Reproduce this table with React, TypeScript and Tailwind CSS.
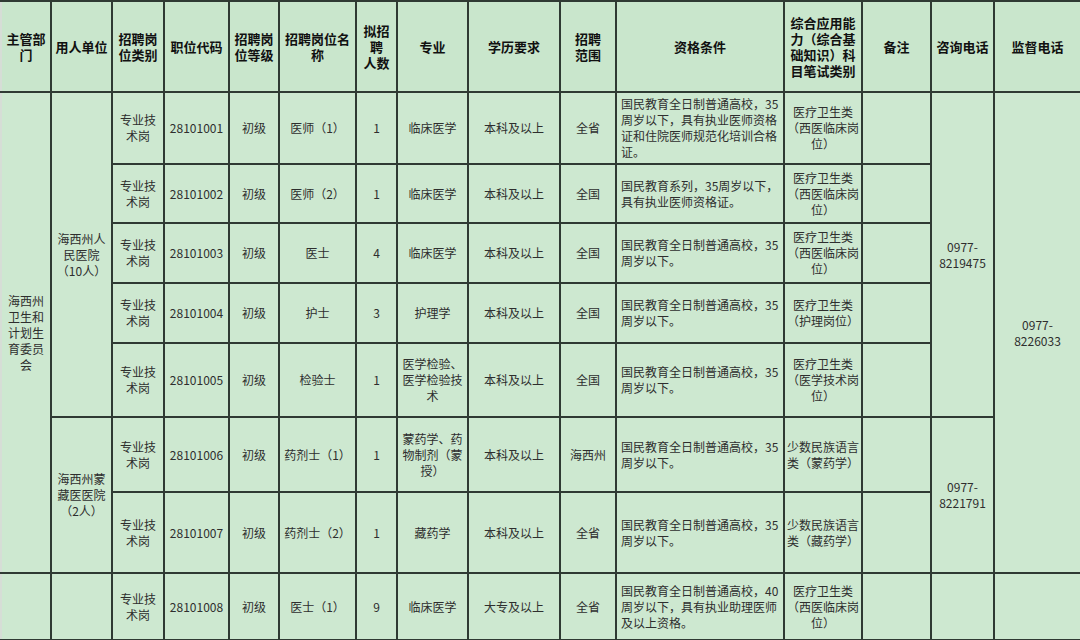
type Job = {
  cat: string[]
  code: string
  level: string
  name: string
  num: string
  major: string[]
  edu: string
  scope: string
  qual: string[]
  exam: string[]
  h: string
}

const jobs: Job[] = [
  {
    cat: ['专业技', '术岗'],
    code: '28101001',
    level: '初级',
    name: '医师（1）',
    num: '1',
    major: ['临床医学'],
    edu: '本科及以上',
    scope: '全省',
    qual: ['国民教育全日制普通高校，35', '周岁以下，具有执业医师资格', '证和住院医师规范化培训合格', '证。'],
    exam: ['医疗卫生类', '（西医临床岗', '位）'],
    h: 'h-[72px]',
  },
  {
    cat: ['专业技', '术岗'],
    code: '28101002',
    level: '初级',
    name: '医师（2）',
    num: '1',
    major: ['临床医学'],
    edu: '本科及以上',
    scope: '全国',
    qual: ['国民教育系列，35周岁以下，', '具有执业医师资格证。'],
    exam: ['医疗卫生类', '（西医临床岗', '位）'],
    h: 'h-[59px]',
  },
  {
    cat: ['专业技', '术岗'],
    code: '28101003',
    level: '初级',
    name: '医士',
    num: '4',
    major: ['临床医学'],
    edu: '本科及以上',
    scope: '全国',
    qual: ['国民教育全日制普通高校，35', '周岁以下。'],
    exam: ['医疗卫生类', '（西医临床岗', '位）'],
    h: 'h-[60px]',
  },
  {
    cat: ['专业技', '术岗'],
    code: '28101004',
    level: '初级',
    name: '护士',
    num: '3',
    major: ['护理学'],
    edu: '本科及以上',
    scope: '全国',
    qual: ['国民教育全日制普通高校，35', '周岁以下。'],
    exam: ['医疗卫生类', '（护理岗位）'],
    h: 'h-[60px]',
  },
  {
    cat: ['专业技', '术岗'],
    code: '28101005',
    level: '初级',
    name: '检验士',
    num: '1',
    major: ['医学检验、', '医学检验技', '术'],
    edu: '本科及以上',
    scope: '全国',
    qual: ['国民教育全日制普通高校，35', '周岁以下。'],
    exam: ['医疗卫生类', '（医学技术岗', '位）'],
    h: 'h-[74px]',
  },
  {
    cat: ['专业技', '术岗'],
    code: '28101006',
    level: '初级',
    name: '药剂士（1）',
    num: '1',
    major: ['蒙药学、药', '物制剂（蒙', '授）'],
    edu: '本科及以上',
    scope: '海西州',
    qual: ['国民教育全日制普通高校，35', '周岁以下。'],
    exam: ['少数民族语言', '类（蒙药学）'],
    h: 'h-[75px]',
  },
  {
    cat: ['专业技', '术岗'],
    code: '28101007',
    level: '初级',
    name: '药剂士（2）',
    num: '1',
    major: ['藏药学'],
    edu: '本科及以上',
    scope: '全省',
    qual: ['国民教育全日制普通高校，35', '周岁以下。'],
    exam: ['少数民族语言', '类（藏药学）'],
    h: 'h-[81px]',
  },
  {
    cat: ['专业技', '术岗'],
    code: '28101008',
    level: '初级',
    name: '医士（1）',
    num: '9',
    major: ['临床医学'],
    edu: '大专及以上',
    scope: '全省',
    qual: ['国民教育全日制普通高校，40', '周岁以下，具有执业助理医师', '及以上资格。'],
    exam: ['医疗卫生类', '（西医临床岗', '位）'],
    h: 'h-[67px]',
  },
]

const headers = [
  ['主管部', '门'],
  ['用人单位'],
  ['招聘岗', '位类别'],
  ['职位代码'],
  ['招聘岗', '位等级'],
  ['招聘岗位名', '称'],
  ['拟招', '聘', '人数'],
  ['专业'],
  ['学历要求'],
  ['招聘', '范围'],
  ['资格条件'],
  ['综合应用能', '力（综合基', '础知识）科', '目笔试类别'],
  ['备注'],
  ['咨询电话'],
  ['监督电话'],
]

const cell = 'border-2 border-[#2f3a33] align-middle text-center'

function Lines({ lines }: { lines: string[] }) {
  return (
    <>
      {lines.map((line, i) => (
        <div key={i} className="whitespace-nowrap">
          {line}
        </div>
      ))}
    </>
  )
}

export default function App() {
  return (
    <div
      className="h-[640px] w-[1080px] overflow-hidden bg-[#cde8d0]"
      style={{ fontFamily: '"Noto Sans CJK SC", "Liberation Sans", sans-serif' }}
    >
      <table className="w-[1080px] table-fixed border-collapse text-[12px] leading-[16px] text-[#2e2e2e]">
        <colgroup>
          <col className="w-[50px]" />
          <col className="w-[61px]" />
          <col className="w-[52px]" />
          <col className="w-[65px]" />
          <col className="w-[50px]" />
          <col className="w-[77px]" />
          <col className="w-[41px]" />
          <col className="w-[71px]" />
          <col className="w-[92px]" />
          <col className="w-[56px]" />
          <col className="w-[168px]" />
          <col className="w-[78px]" />
          <col className="w-[69px]" />
          <col className="w-[63px]" />
          <col className="w-[87px]" />
        </colgroup>
        <thead>
          <tr className="h-[91px] bg-[#c9e6cc]">
            {headers.map((h, i) => (
              <th
                key={i}
                className={`${cell} px-0 text-[13px] font-bold leading-[16px] text-[#111] ${i === 0 ? 'border-l-[#d6ddd6]' : ''}`}
              >
                <Lines lines={h} />
              </th>
            ))}
          </tr>
        </thead>
        <tbody>
          {jobs.map((job, i) => (
            <tr key={job.code} className={job.h}>
              {i === 0 && (
                <td rowSpan={7} className={`${cell} border-l-[#d6ddd6]`}>
                  <Lines lines={['海西州', '卫生和', '计划生', '育委员', '会']} />
                </td>
              )}
              {i === 7 && <td className={`${cell} border-l-[#d6ddd6]`} />}
              {i === 0 && (
                <td rowSpan={5} className={cell}>
                  <Lines lines={['海西州人', '民医院', '（10人）']} />
                </td>
              )}
              {i === 5 && (
                <td rowSpan={2} className={cell}>
                  <Lines lines={['海西州蒙', '藏医医院', '（2人）']} />
                </td>
              )}
              {i === 7 && <td className={cell} />}
              <td className={cell}>
                <Lines lines={job.cat} />
              </td>
              <td className={cell}>{job.code}</td>
              <td className={cell}>{job.level}</td>
              <td className={cell}>{job.name}</td>
              <td className={cell}>{job.num}</td>
              <td className={cell}>
                <Lines lines={job.major} />
              </td>
              <td className={cell}>{job.edu}</td>
              <td className={cell}>{job.scope}</td>
              <td className={`${cell} pl-[4px] text-left`}>
                <Lines lines={job.qual} />
              </td>
              <td className={cell}>
                <Lines lines={job.exam} />
              </td>
              <td className={cell} />
              {i === 0 && (
                <td rowSpan={5} className={cell}>
                  <Lines lines={['0977-', '8219475']} />
                </td>
              )}
              {i === 5 && (
                <td rowSpan={2} className={cell}>
                  <Lines lines={['0977-', '8221791']} />
                </td>
              )}
              {i === 7 && <td className={cell} />}
              {i === 0 && (
                <td rowSpan={7} className={cell}>
                  <Lines lines={['0977-', '8226033']} />
                </td>
              )}
              {i === 7 && <td className={cell} />}
            </tr>
          ))}
        </tbody>
      </table>
    </div>
  )
}
